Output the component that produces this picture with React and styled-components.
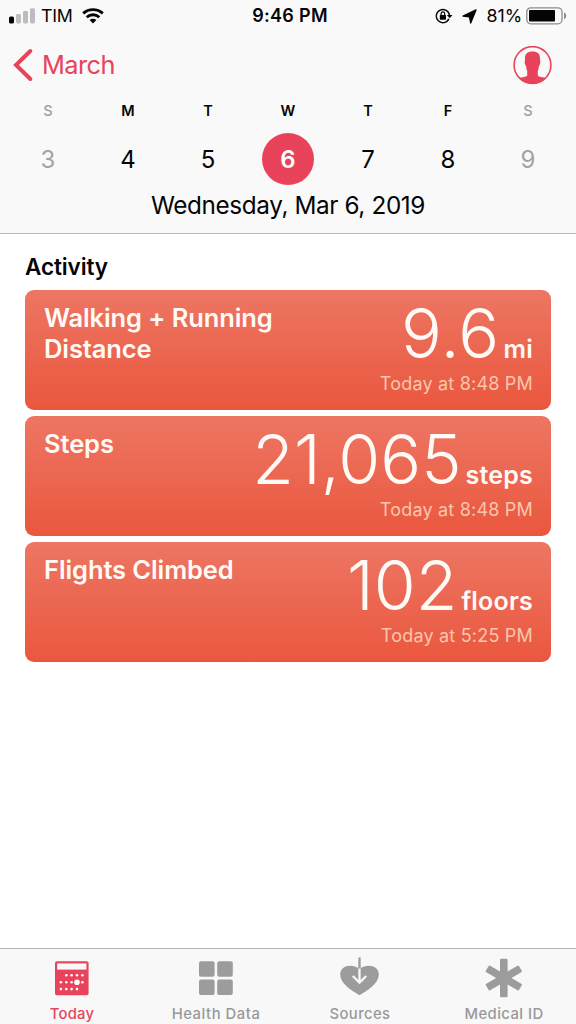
import React from 'react';
import styled, { createGlobalStyle } from 'styled-components';

const GlobalStyle = createGlobalStyle`
  * {
    box-sizing: border-box;
  }

  body {
    margin: 0;
    background: #ffffff;
    font-family: Inter, 'Liberation Sans', sans-serif;
    color: #050505;
  }
`;

const Screen = styled.div`
  width: 576px;
  height: 1024px;
  display: flex;
  flex-direction: column;
  overflow: hidden;
`;

const Header = styled.header`
  height: 234px;
  background: #f9f9f9;
  border-bottom: 1px solid #b9b9b9;
`;

const StatusBar = styled.div`
  height: 32px;
  padding: 0 9px;
  display: grid;
  grid-template-columns: 1fr auto 1fr;
  align-items: center;
  font-size: 17.8px;
  line-height: 32px;
`;

const StatusGroup = styled.div`
  display: flex;
  align-items: center;
  justify-content: ${(props) => (props.$end ? 'flex-end' : 'flex-start')};
`;

const StatusIcons = styled.div`
  display: flex;
  align-items: center;
  gap: 9px;
`;

const Carrier = styled.span`
  margin: 0 9px 0 6px;
  letter-spacing: -0.2px;
`;

const Clock = styled.span`
  margin-left: 4px;
  font-size: 18px;
  font-weight: 600;
  letter-spacing: 0.3px;
`;

const BatteryLevel = styled.span`
  margin: 0 4px 0 10px;
  letter-spacing: -0.1px;
`;

const NavBar = styled.nav`
  height: 66px;
  padding: 0 24px 0 13px;
  display: flex;
  align-items: center;
  justify-content: space-between;
`;

const BackButton = styled.button`
  display: flex;
  align-items: center;
  gap: 8px;
  padding: 0;
  border: none;
  background: none;
  font-family: inherit;
  font-size: 25.3px;
  line-height: 32px;
  letter-spacing: -0.55px;
  color: #e9435c;
`;

const Week = styled.div`
  padding: 0 8px;
  display: grid;
  grid-template-columns: repeat(7, 80px);
`;

const Day = styled.div`
  display: flex;
  flex-direction: column;
  align-items: center;
  color: ${(props) => (props.$weekend ? '#a3a3a3' : '#050505')};
`;

const DayLetter = styled.span`
  height: 35px;
  font-size: 14.5px;
  font-weight: ${(props) => (props.$weekend ? 500 : 600)};
  line-height: 26px;
`;

const DayNumber = styled.span`
  width: 52px;
  height: 52px;
  border-radius: 50%;
  text-align: center;
  font-size: 24px;
  line-height: 53px;
  font-weight: ${(props) => (props.$selected ? 600 : 400)};
  color: ${(props) => (props.$selected ? '#ffffff' : 'inherit')};
  background: ${(props) => (props.$selected ? '#e9435c' : 'transparent')};
`;

const FullDate = styled.div`
  text-align: center;
  font-size: 24.3px;
  line-height: 40px;
  letter-spacing: -0.38px;
`;

const Content = styled.main`
  flex: 1;
  padding: 17px 25px 0;
`;

const SectionTitle = styled.h2`
  margin: 0 0 7.4px;
  font-size: 22.5px;
  font-weight: 600;
  line-height: 32px;
  letter-spacing: -0.1px;
`;

const CardList = styled.div`
  display: flex;
  flex-direction: column;
  gap: 6.5px;
`;

const Card = styled.section`
  height: 119.5px;
  padding: 13px 18px 0 19px;
  display: flex;
  justify-content: space-between;
  border-radius: 9px;
  background: linear-gradient(#ed7663, #ea573e);
  color: #fffaf6;
`;

const CardTitle = styled.h3`
  margin: -1px 0 0;
  width: 240px;
  font-size: 25.5px;
  font-weight: 560;
  line-height: 31px;
  letter-spacing: -0.1px;
  white-space: pre-line;
`;

const Reading = styled.div`
  display: flex;
  flex-direction: column;
  align-items: flex-end;
`;

const Amount = styled.div`
  display: flex;
  align-items: baseline;
  gap: 4px;
  height: 66px;
  line-height: 61px;
  white-space: nowrap;
`;

const Value = styled.span`
  font-size: 68px;
  font-weight: 300;
  letter-spacing: ${(props) => props.$spacing}px;
`;

const Unit = styled.span`
  font-size: 25px;
  font-weight: 600;
  letter-spacing: 0.2px;
`;

const Time = styled.span`
  font-size: 18px;
  line-height: 30px;
  letter-spacing: 0.2px;
  color: #fbc5ad;
`;

const TabBar = styled.footer`
  height: 76px;
  display: grid;
  grid-template-columns: repeat(4, 144px);
  background: #f8f8f8;
  border-top: 1px solid #b4b4b4;
`;

const Tab = styled.a`
  display: flex;
  flex-direction: column;
  align-items: center;
  padding-top: 8px;
  color: ${(props) => (props.$active ? '#e9435c' : '#999999')};
`;

const TabLabel = styled.span`
  margin-top: 4px;
  font-size: 14.8px;
  font-weight: 500;
  line-height: 22px;
  letter-spacing: ${(props) => props.$spacing}px;
`;

const SignalIcon = () => (
  <svg width="26" height="16" viewBox="0 0 26 16">
    <rect x="0" y="8.5" width="5" height="7" rx="1.6" fill="#050505" />
    <rect x="7" y="6" width="5" height="9.5" rx="1.4" fill="#bdbdbd" />
    <rect x="14" y="3" width="5" height="12.5" rx="1.4" fill="#bdbdbd" />
    <rect x="21" y="0.3" width="5" height="15.2" rx="1.4" fill="#bdbdbd" />
  </svg>
);

const WifiIcon = () => (
  <svg width="22" height="16" viewBox="0 0 22 16" fill="none" stroke="#050505" strokeWidth="2.9">
    <path d="M1.2 5.4C6.8 0.3 15.2 0.3 20.8 5.4" />
    <path d="M4.7 9.2C8.3 5.9 13.7 5.9 17.3 9.2" />
    <path d="M11 15.4L7.6 12C9.5 10.3 12.5 10.3 14.4 12Z" fill="#050505" stroke="none" />
  </svg>
);

const RotationLockIcon = () => (
  <svg width="18" height="16" viewBox="0 0 18 16" fill="none" stroke="#050505" strokeWidth="1.4">
    <path d="M13.9 10.9A6.6 6.6 0 1 1 14.5 7.4" />
    <path d="M11.9 7H17.5L14.7 10.2Z" fill="#050505" stroke="none" />
    <rect x="4.8" y="7.1" width="6.2" height="4.6" rx="0.6" fill="#050505" stroke="none" />
    <path d="M6.1 7.2V5.7a1.8 1.8 0 0 1 3.6 0V7.2" strokeWidth="1.2" />
  </svg>
);

const LocationIcon = () => (
  <svg width="15" height="15" viewBox="0 0 15 15">
    <path
      d="M14 0.9L8.7 14L7.5 7.9L1 7.1Z"
      fill="#050505"
      stroke="#050505"
      strokeWidth="1.3"
      strokeLinejoin="round"
    />
  </svg>
);

const BatteryIcon = () => (
  <svg width="41" height="18" viewBox="0 0 41 18">
    <rect x="0.8" y="0.8" width="35.2" height="16" rx="4" fill="none" stroke="#8c8c8c" strokeWidth="1.3" />
    <rect x="3" y="3" width="26" height="11.6" rx="1" fill="#050505" />
    <path d="M38 5.6C41 6.6 41 11.2 38 12.2Z" fill="#8c8c8c" />
  </svg>
);

const BackIcon = () => (
  <svg width="21" height="34" viewBox="0 0 21 34">
    <path
      d="M17.3 3L3 17L17.3 31"
      fill="none"
      stroke="#e9435c"
      strokeWidth="4"
      strokeLinecap="round"
      strokeLinejoin="miter"
    />
  </svg>
);

const ProfileIcon = () => (
  <svg width="39" height="39" viewBox="0 0 39 39">
    <circle cx="19.5" cy="19" r="18.4" fill="none" stroke="#e9435c" strokeWidth="1.6" />
    <path
      d="M19.5 5.4C13.8 5.4 11.5 8.2 12 14.4C11.2 15 11.9 19.4 13.1 20C13.3 22 13.6 23.8 14.2 25V29.6C13 31.2 9.4 31.4 5.6 32C12.8 40 26.2 40 33.4 32C29.6 31.4 26 31.2 24.8 29.6V25C25.4 23.8 25.7 22 25.9 20C27.1 19.4 27.8 15 27 14.4C27.5 8.2 25.2 5.4 19.5 5.4Z"
      fill="#e9435c"
    />
  </svg>
);

const CALENDAR_DOTS = [
  [11.7, 14.3], [17, 14.3], [22.4, 14.3], [27.8, 14.3],
  [6.3, 21.2], [11.7, 21.2], [17, 21.2], [27.8, 21.2],
  [6.3, 28.1], [11.7, 28.1], [17, 28.1], [22.4, 28.1],
];

const TodayIcon = () => (
  <svg width="42" height="42" viewBox="-4 -4 42 42">
    <rect x="0" y="0.2" width="33.6" height="34" rx="2" fill="#e9435c" />
    <rect x="2.2" y="2.4" width="29.2" height="6.2" fill="#f8f8f8" />
    {CALENDAR_DOTS.map(([x, y]) => (
      <circle key={`${x}-${y}`} cx={x - 0.4} cy={y} r="1.3" fill="#ffffff" />
    ))}
    <circle cx="22" cy="21.2" r="2.8" fill="#ffffff" />
  </svg>
);

const DataIcon = () => (
  <svg width="42" height="42" viewBox="-4 -4 42 42" fill="#9c9c9c">
    <rect x="0" y="0.2" width="15.6" height="15.6" rx="2" />
    <rect x="18.2" y="0.2" width="15.6" height="15.6" rx="2" />
    <rect x="0" y="18.4" width="15.6" height="15.6" rx="2" />
    <rect x="18.2" y="18.4" width="15.6" height="15.6" rx="2" />
  </svg>
);

const SourcesIcon = () => (
  <svg width="42" height="42" viewBox="0 0 42 42">
    <path
      d="M20.5 38.2C12.5 33.8 1.2 26.6 1.2 17.6C1.2 8.6 12.5 5.8 20.5 12C28.5 5.8 39.8 8.6 39.8 17.6C39.8 26.6 28.5 33.8 20.5 38.2Z"
      fill="#9c9c9c"
    />
    <path d="M20.5 0.5V12" stroke="#9c9c9c" strokeWidth="2.4" />
    <path d="M20.5 11.6V25.5M13.8 19L20.5 25.7L27.2 19" fill="none" stroke="#f8f8f8" strokeWidth="2.3" />
  </svg>
);

const MedicalIcon = () => (
  <svg width="42" height="42" viewBox="0 0 42 42" fill="#9c9c9c">
    <rect x="17" y="1.8" width="7.6" height="38.4" rx="1.2" />
    <rect x="17" y="1.8" width="7.6" height="38.4" rx="1.2" transform="rotate(60 20.8 21)" />
    <rect x="17" y="1.8" width="7.6" height="38.4" rx="1.2" transform="rotate(120 20.8 21)" />
  </svg>
);

const days = [
  { letter: 'S', number: 3, weekend: true },
  { letter: 'M', number: 4 },
  { letter: 'T', number: 5 },
  { letter: 'W', number: 6, selected: true },
  { letter: 'T', number: 7 },
  { letter: 'F', number: 8 },
  { letter: 'S', number: 9, weekend: true },
];

const readings = [
  { title: 'Walking + Running\nDistance', value: '9.6', unit: 'mi', time: 'Today at 8:48 PM', spacing: 0.3 },
  { title: 'Steps', value: '21,065', unit: 'steps', time: 'Today at 8:48 PM', spacing: 0 },
  { title: 'Flights Climbed', value: '102', unit: 'floors', time: 'Today at 5:25 PM', spacing: 0 },
];

const tabs = [
  { label: 'Today', Icon: TodayIcon, active: true, spacing: 0.2 },
  { label: 'Health Data', Icon: DataIcon, spacing: 0.55 },
  { label: 'Sources', Icon: SourcesIcon, spacing: 0.4 },
  { label: 'Medical ID', Icon: MedicalIcon, spacing: 0.45 },
];

export default function App() {
  return (
    <Screen>
      <GlobalStyle />
      <Header>
        <StatusBar>
          <StatusGroup>
            <SignalIcon />
            <Carrier>TIM</Carrier>
            <WifiIcon />
          </StatusGroup>
          <Clock>9:46 PM</Clock>
          <StatusGroup $end>
            <StatusIcons>
              <RotationLockIcon />
              <LocationIcon />
            </StatusIcons>
            <BatteryLevel>81%</BatteryLevel>
            <BatteryIcon />
          </StatusGroup>
        </StatusBar>
        <NavBar>
          <BackButton>
            <BackIcon />
            March
          </BackButton>
          <ProfileIcon />
        </NavBar>
        <Week>
          {days.map((day) => (
            <Day key={day.number} $weekend={day.weekend}>
              <DayLetter $weekend={day.weekend}>{day.letter}</DayLetter>
              <DayNumber $selected={day.selected}>{day.number}</DayNumber>
            </Day>
          ))}
        </Week>
        <FullDate>Wednesday, Mar 6, 2019</FullDate>
      </Header>
      <Content>
        <SectionTitle>Activity</SectionTitle>
        <CardList>
          {readings.map((item) => (
            <Card key={item.title}>
              <CardTitle>{item.title}</CardTitle>
              <Reading>
                <Amount>
                  <Value $spacing={item.spacing}>{item.value}</Value>
                  <Unit>{item.unit}</Unit>
                </Amount>
                <Time>{item.time}</Time>
              </Reading>
            </Card>
          ))}
        </CardList>
      </Content>
      <TabBar>
        {tabs.map(({ label, Icon, active, spacing }) => (
          <Tab key={label} $active={active}>
            <Icon />
            <TabLabel $spacing={spacing}>{label}</TabLabel>
          </Tab>
        ))}
      </TabBar>
    </Screen>
  );
}
